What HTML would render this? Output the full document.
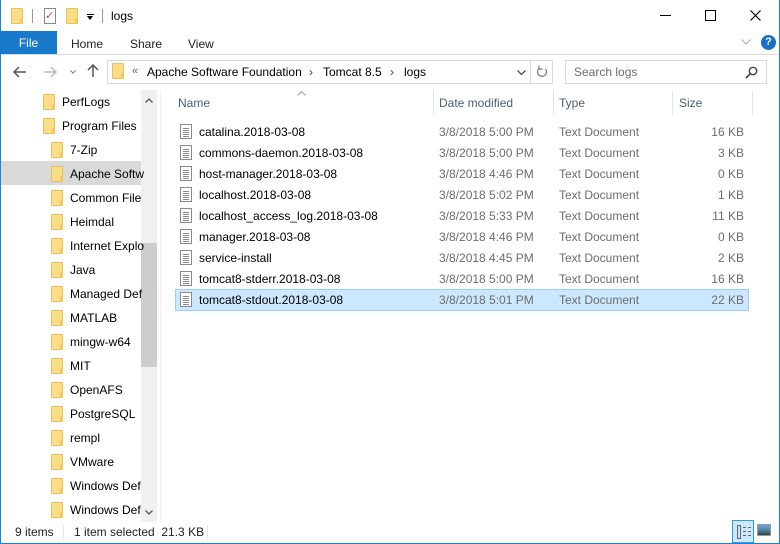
<!DOCTYPE html>
<html><head><meta charset="utf-8"><style>
*{margin:0;padding:0;box-sizing:border-box}
body{width:780px;height:544px;overflow:hidden;background:#fff;font-family:"Liberation Sans",sans-serif;font-size:12px;color:#000;position:relative}
.a{position:absolute}
.frame{left:0;top:0;width:780px;height:544px;border:1px solid #1883d7;border-top:none}
.fold{position:absolute;width:12px;height:16px;background:#fbdc87;border:1px solid #e6c25e;border-radius:1px}
.fold:after{content:"";position:absolute;right:-1px;bottom:-1px;width:3px;height:6px;background:#f2c95c}
.doc{position:absolute;width:12px;height:15px;border:1px solid #8a8a8a;background:#fff}
.doc i{position:absolute;left:2px;width:6px;height:1px;background:#8a8a8a}
.nav{position:absolute;left:70px;font-size:12px}
.row{position:absolute;left:176px;width:572px;height:21px;line-height:21px}
.row span{position:absolute;color:#6d6d6d}
</style></head><body>
<div class="a frame"></div>
<!-- title bar -->
<div class="fold" style="left:11px;top:8px"></div>
<div class="a" style="left:32px;top:9px;width:1px;height:14px;background:#999"></div>
<div class="a" style="left:44px;top:8px;width:12px;height:16px;border:1px solid #888;background:#fff"></div>
<div class="a" style="left:45px;top:11px;color:#e04020;font-size:11px;line-height:10px">✓</div>
<div class="fold" style="left:66px;top:8px"></div>
<div class="a" style="left:87px;top:14px;width:7px;height:1px;background:#000"></div>
<div class="a" style="left:87px;top:16px;width:0;height:0;border-left:3.5px solid transparent;border-right:3.5px solid transparent;border-top:4px solid #000"></div>
<div class="a" style="left:102px;top:9px;width:1px;height:14px;background:#999"></div>
<div class="a" style="left:111px;top:9px;font-size:12px">logs</div>
<div class="a" style="left:660px;top:15px;width:11px;height:1px;background:#000"></div>
<div class="a" style="left:705px;top:10px;width:11px;height:11px;border:1px solid #000"></div>
<svg class="a" style="left:750px;top:10px" width="11" height="11"><path d="M0.5 0.5L10.5 10.5M10.5 0.5L0.5 10.5" stroke="#000" stroke-width="1.2"/></svg>
<!-- ribbon -->
<div class="a" style="left:0;top:31px;width:57px;height:23px;background:#1979ca;color:#fff;text-align:center;line-height:24px">File</div>
<div class="a" style="left:71px;top:37px;color:#222">Home</div>
<div class="a" style="left:130px;top:37px;color:#222">Share</div>
<div class="a" style="left:188px;top:37px;color:#222">View</div>
<svg class="a" style="left:741px;top:39px" width="10" height="6"><path d="M0.5 0.5L5 5L9.5 0.5" stroke="#aaa" fill="none"/></svg>
<div class="a" style="left:761px;top:35px;width:15px;height:15px;border-radius:50%;background:#1a6fc9;color:#fff;font-weight:bold;font-size:11px;text-align:center;line-height:15px">?</div>
<div class="a" style="left:1px;top:54px;width:778px;height:1px;background:#dadbdc"></div>
<!-- address -->
<svg class="a" style="left:13px;top:66px" width="14" height="12"><path d="M1 6H13M6 1L1 6L6 11" stroke="#555" stroke-width="1.5" fill="none"/></svg>
<svg class="a" style="left:43px;top:66px" width="14" height="12"><path d="M1 6H13M8 1L13 6L8 11" stroke="#bbb" stroke-width="1.5" fill="none"/></svg>
<svg class="a" style="left:70px;top:70px" width="6" height="4"><path d="M0.5 0.5L3 3L5.5 0.5" stroke="#777" fill="none"/></svg>
<svg class="a" style="left:87px;top:64px" width="12" height="14"><path d="M6 13V1M1 6L6 1L11 6" stroke="#555" stroke-width="1.5" fill="none"/></svg>
<div class="a" style="left:107px;top:60px;width:446px;height:24px;border:1px solid #d9d9d9"></div>
<div class="a" style="left:530px;top:60px;width:1px;height:24px;background:#d9d9d9"></div>
<div class="fold" style="left:112px;top:63px"></div>
<div class="a" style="left:132px;top:65px;color:#666;font-size:11px">«</div>
<div class="a" style="left:147px;top:65px">Apache Software Foundation</div>
<div class="a" style="left:309px;top:65px;color:#444">›</div>
<div class="a" style="left:323px;top:65px">Tomcat 8.5</div>
<div class="a" style="left:390px;top:65px;color:#444">›</div>
<div class="a" style="left:404px;top:65px">logs</div>
<svg class="a" style="left:517px;top:70px" width="9" height="6"><path d="M0.5 0.5L4.5 4.5L8.5 0.5" stroke="#555" stroke-width="1.3" fill="none"/></svg>
<svg class="a" style="left:536px;top:65px" width="12" height="14"><path d="M9.5 4A4.5 4.5 0 1 1 3 3.5M3 0.5V4H6.5" stroke="#777" stroke-width="1.2" fill="none"/></svg>
<div class="a" style="left:565px;top:60px;width:202px;height:24px;border:1px solid #d9d9d9"></div>
<div class="a" style="left:574px;top:65px;color:#6d6d6d">Search logs</div>
<svg class="a" style="left:745px;top:66px" width="13" height="13"><circle cx="8" cy="5" r="3.7" stroke="#444" stroke-width="1.4" fill="none"/><path d="M5.5 7.5L1 12" stroke="#444" stroke-width="1.6"/></svg>
<!-- nav pane -->
<div class="a" style="left:1px;top:161px;width:140px;height:24px;background:#d9d9d9"></div>
<div class="a" style="left:141px;top:90px;width:16px;height:432px;background:#f0f0f0"></div>
<div class="a" style="left:141px;top:243px;width:16px;height:124px;background:#cdcdcd"></div>
<svg class="a" style="left:145px;top:98px" width="8" height="5"><path d="M0.5 4.5L4 1L7.5 4.5" stroke="#555" stroke-width="1.3" fill="none"/></svg>
<svg class="a" style="left:145px;top:510px" width="8" height="5"><path d="M0.5 0.5L4 4L7.5 0.5" stroke="#555" stroke-width="1.3" fill="none"/></svg>
<div class="a" style="left:160px;top:90px;width:1px;height:432px;background:#f0f0f0"></div>
<div class="fold" style="left:43px;top:94px"></div><div class="nav" style="left:62px;top:95px">PerfLogs</div>
<div class="fold" style="left:43px;top:118px"></div><div class="nav" style="left:62px;top:119px">Program Files</div>
<div class="fold" style="left:51px;top:142px"></div><div class="nav" style="top:143px">7-Zip</div>
<div class="fold" style="left:51px;top:166px"></div><div class="nav" style="top:167px">Apache Softw</div>
<div class="fold" style="left:51px;top:190px"></div><div class="nav" style="top:191px">Common File</div>
<div class="fold" style="left:51px;top:214px"></div><div class="nav" style="top:215px">Heimdal</div>
<div class="fold" style="left:51px;top:238px"></div><div class="nav" style="top:239px">Internet Explo</div>
<div class="fold" style="left:51px;top:262px"></div><div class="nav" style="top:263px">Java</div>
<div class="fold" style="left:51px;top:286px"></div><div class="nav" style="top:287px">Managed Def</div>
<div class="fold" style="left:51px;top:310px"></div><div class="nav" style="top:311px">MATLAB</div>
<div class="fold" style="left:51px;top:334px"></div><div class="nav" style="top:335px">mingw-w64</div>
<div class="fold" style="left:51px;top:358px"></div><div class="nav" style="top:359px">MIT</div>
<div class="fold" style="left:51px;top:382px"></div><div class="nav" style="top:383px">OpenAFS</div>
<div class="fold" style="left:51px;top:406px"></div><div class="nav" style="top:407px">PostgreSQL</div>
<div class="fold" style="left:51px;top:430px"></div><div class="nav" style="top:431px">rempl</div>
<div class="fold" style="left:51px;top:454px"></div><div class="nav" style="top:455px">VMware</div>
<div class="fold" style="left:51px;top:478px"></div><div class="nav" style="top:479px">Windows Def</div>
<div class="fold" style="left:51px;top:502px"></div><div class="nav" style="top:503px">Windows Def</div>
<!-- headers -->
<svg class="a" style="left:297px;top:91px" width="9" height="5"><path d="M0.5 4.5L4.5 0.5L8.5 4.5" stroke="#999" fill="none"/></svg>
<div class="a" style="left:178px;top:96px;color:#4c607a">Name</div>
<div class="a" style="left:433px;top:90px;width:1px;height:25px;background:#e5e5e5"></div>
<div class="a" style="left:439px;top:96px;color:#4c607a">Date modified</div>
<div class="a" style="left:553px;top:90px;width:1px;height:25px;background:#e5e5e5"></div>
<div class="a" style="left:559px;top:96px;color:#4c607a">Type</div>
<div class="a" style="left:672px;top:90px;width:1px;height:25px;background:#e5e5e5"></div>
<div class="a" style="left:679px;top:96px;color:#4c607a">Size</div>
<div class="a" style="left:752px;top:90px;width:1px;height:25px;background:#e5e5e5"></div>
<div class="a" style="left:175px;top:289px;width:574px;height:22px;background:#cce8ff;border:1px solid #99d1ff"></div>
<div id="rows"></div>
<script>
var d=[["catalina.2018-03-08","5:00","16"],["commons-daemon.2018-03-08","5:00","3"],["host-manager.2018-03-08","4:46","0"],["localhost.2018-03-08","5:02","1"],["localhost_access_log.2018-03-08","5:33","11"],["manager.2018-03-08","4:46","0"],["service-install","4:45","2"],["tomcat8-stderr.2018-03-08","5:00","16"],["tomcat8-stdout.2018-03-08","5:01","22"]];
var h="";d.forEach(function(r,i){var t=122+i*21;
h+='<div class="doc" style="left:180px;top:'+(t+2)+'px"><i style="top:3px"></i><i style="top:5px"></i><i style="top:7px"></i><i style="top:9px"></i><i style="top:11px"></i></div>';
h+='<div class="row" style="top:'+t+'px"><span style="left:23px;color:#000">'+r[0]+'</span><span style="left:263px">3/8/2018 '+r[1]+' PM</span><span style="left:383px">Text Document</span><span style="right:4px">'+r[2]+' KB</span></div>';});
document.getElementById("rows").innerHTML=h;
</script>
<!-- status -->
<div class="a" style="left:15px;top:525px;color:#222">9 items</div>
<div class="a" style="left:63px;top:525px;width:1px;height:14px;background:#e5e5e5"></div>
<div class="a" style="left:74px;top:525px;color:#222">1 item selected&nbsp; 21.3 KB</div>
<div class="a" style="left:207px;top:525px;width:1px;height:14px;background:#e5e5e5"></div>
<div class="a" style="left:732px;top:520px;width:22px;height:23px;background:#cce8ff;border:1px solid #3399dd"></div>
<div class="a" style="left:737px;top:525px;width:4px;height:14px;border:1px solid #666"></div>
<div class="a" style="left:743px;top:527px;width:8px;height:1px;border-top:1px dashed #666"></div>
<div class="a" style="left:743px;top:531px;width:8px;height:1px;border-top:1px dashed #666"></div>
<div class="a" style="left:743px;top:535px;width:8px;height:1px;border-top:1px dashed #666"></div>
<div class="a" style="left:757px;top:524px;width:14px;height:12px;border:1px solid #999;background:linear-gradient(#6fa8e8,#4a7a9a 60%,#2a4a3a)"></div>
</body></html>
